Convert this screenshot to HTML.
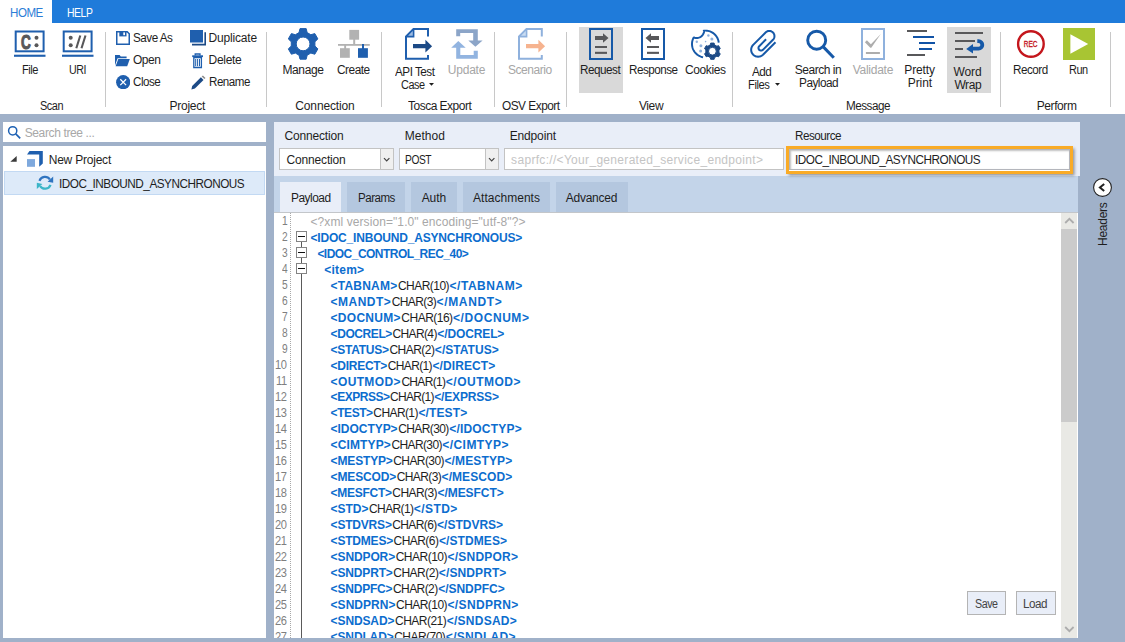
<!DOCTYPE html>
<html><head><meta charset="utf-8"><title>API Scan</title>
<style>
html,body{margin:0;padding:0}
body{width:1125px;height:642px;overflow:hidden;background:#a0b1c9;font-family:"Liberation Sans",sans-serif;position:relative}
.t{position:absolute;white-space:pre;line-height:16px;font-size:12px}
.r{position:absolute;display:block}
.ln{position:absolute;white-space:pre;line-height:16px;font-size:12px}
</style></head><body>
<div class="r" style="left:0px;top:0px;width:1125px;height:23px;background:#1f7bda;"></div>
<div class="r" style="left:0px;top:0px;width:52px;height:23px;background:#ffffff;"></div>
<span class="t" style="left:10.10px;top:4.63px;font-size:12px;letter-spacing:-0.500px;color:#2b7dd6;transform:scaleX(0.9652);transform-origin:0 0;">HOME</span>
<span class="t" style="left:67.10px;top:4.63px;font-size:12px;letter-spacing:-0.500px;color:#ffffff;transform:scaleX(0.8645);transform-origin:0 0;">HELP</span>
<div class="r" style="left:0px;top:23px;width:1125px;height:91px;background:#ffffff;"></div>
<div class="r" style="left:105px;top:32px;width:1px;height:75px;background:#c8c8c8;"></div>
<div class="r" style="left:266px;top:32px;width:1px;height:75px;background:#c8c8c8;"></div>
<div class="r" style="left:381px;top:32px;width:1px;height:75px;background:#c8c8c8;"></div>
<div class="r" style="left:494px;top:32px;width:1px;height:75px;background:#c8c8c8;"></div>
<div class="r" style="left:566px;top:32px;width:1px;height:75px;background:#c8c8c8;"></div>
<div class="r" style="left:732px;top:32px;width:1px;height:75px;background:#c8c8c8;"></div>
<div class="r" style="left:1000px;top:32px;width:1px;height:75px;background:#c8c8c8;"></div>
<div class="r" style="left:1110px;top:32px;width:1px;height:75px;background:#c8c8c8;"></div>
<span class="t" style="left:40.10px;top:98.33px;font-size:12px;letter-spacing:-0.500px;color:#1e1e1e;transform:scaleX(0.9082);transform-origin:0 0;">Scan</span>
<span class="t" style="left:169.60px;top:98.33px;font-size:12px;letter-spacing:-0.286px;color:#1e1e1e;">Project</span>
<span class="t" style="left:295.30px;top:98.33px;font-size:12px;letter-spacing:-0.137px;color:#1e1e1e;">Connection</span>
<span class="t" style="left:407.50px;top:98.33px;font-size:12px;letter-spacing:-0.500px;color:#1e1e1e;transform:scaleX(0.9982);transform-origin:0 0;">Tosca Export</span>
<span class="t" style="left:502.40px;top:98.33px;font-size:12px;letter-spacing:-0.500px;color:#1e1e1e;transform:scaleX(0.9864);transform-origin:0 0;">OSV Export</span>
<span class="t" style="left:638.90px;top:98.33px;font-size:12px;letter-spacing:-0.375px;color:#1e1e1e;">View</span>
<span class="t" style="left:846.10px;top:98.33px;font-size:12px;letter-spacing:-0.500px;color:#1e1e1e;transform:scaleX(0.9734);transform-origin:0 0;">Message</span>
<span class="t" style="left:1036.80px;top:98.33px;font-size:12px;letter-spacing:-0.429px;color:#1e1e1e;">Perform</span>
<svg class="r" style="left:13.8px;top:30px" width="32" height="28" viewBox="0 0 32 28"><title>C:</title><rect x="1.7" y="1.5" width="27.9" height="19.8" fill="#fff" stroke="#1f5fae" stroke-width="2"/><rect x="-0.3" y="24.7" width="31.8" height="2.1" fill="#1f5fae"/><text transform="translate(7,18.9) scale(0.66,1)" font-family="Liberation Sans" font-weight="bold" font-size="20.6" fill="#58585a" stroke="#58585a" stroke-width="1.1">C</text><circle cx="22.5" cy="7.7" r="2" fill="#58585a"/><circle cx="22.5" cy="15.3" r="2" fill="#58585a"/></svg>
<svg class="r" style="left:61.8px;top:30px" width="32" height="28" viewBox="0 0 32 28"><title>://</title><rect x="1.7" y="1.5" width="27.9" height="19.8" fill="#fff" stroke="#1f5fae" stroke-width="2"/><rect x="-0.3" y="24.7" width="31.8" height="2.1" fill="#1f5fae"/><circle cx="8.7" cy="7.7" r="2" fill="#58585a"/><circle cx="8.7" cy="15.3" r="2" fill="#58585a"/><path d="M14.3 18.3 L18.3 5.5 M19.5 18.3 L23.5 5.5" stroke="#58585a" stroke-width="2.1" fill="none"/></svg>
<span class="t" style="left:22.10px;top:61.83px;font-size:12px;letter-spacing:-0.500px;color:#1e1e1e;transform:scaleX(0.9231);transform-origin:0 0;">File</span>
<span class="t" style="left:69.10px;top:61.83px;font-size:12px;letter-spacing:-0.500px;color:#1e1e1e;transform:scaleX(0.8859);transform-origin:0 0;">URI</span>
<svg class="r" style="left:116px;top:31px" width="14" height="14" viewBox="0 0 14 14"><path d="M0.75 0.75 H11.2 L13.25 2.8 V13.25 H0.75 Z" fill="#fff" stroke="#1f5fae" stroke-width="1.5"/><rect x="3.3" y="0.8" width="7.2" height="4.6" fill="#1f5fae"/><rect x="7.3" y="1.4" width="1.7" height="2.8" fill="#fff"/></svg>
<span class="t" style="left:133.40px;top:30.33px;font-size:12px;letter-spacing:-0.500px;color:#1e1e1e;transform:scaleX(0.9728);transform-origin:0 0;">Save As</span>
<svg class="r" style="left:115px;top:53.5px" width="15" height="13" viewBox="0 0 15 13"><path d="M0 1 H4.6 L5.8 2.4 H11.6 V4.2 H2.6 L0 11.6 Z" fill="#1f5fae"/><path d="M3.3 5 H14.8 L12.2 12.2 H0.6 Z" fill="#1f5fae"/></svg>
<span class="t" style="left:133.40px;top:52.33px;font-size:12px;letter-spacing:-0.500px;color:#1e1e1e;transform:scaleX(0.9974);transform-origin:0 0;">Open</span>
<svg class="r" style="left:116px;top:74.5px" width="14.4" height="14.4" viewBox="0 0 14.4 14.4"><circle cx="7.2" cy="7.2" r="7.1" fill="#1f5fae"/><path d="M4.3 4.3 L10.1 10.1 M10.1 4.3 L4.3 10.1" stroke="#fff" stroke-width="1.25"/></svg>
<span class="t" style="left:133.40px;top:74.33px;font-size:12px;letter-spacing:-0.500px;color:#1e1e1e;transform:scaleX(0.9681);transform-origin:0 0;">Close</span>
<svg class="r" style="left:190px;top:30px" width="16.5" height="16" viewBox="0 0 16.5 16"><path d="M2 14.6 H15.2 V2.2" fill="none" stroke="#1c4a86" stroke-width="1.6"/><rect x="0" y="0" width="13" height="12.5" fill="#1f5fae"/></svg>
<span class="t" style="left:208.50px;top:30.33px;font-size:12px;letter-spacing:-0.170px;color:#1e1e1e;">Duplicate</span>
<svg class="r" style="left:191px;top:52.5px" width="13" height="16" viewBox="0 0 13 16"><path d="M4.2 2.6 V1 H9 V2.6" fill="none" stroke="#1f5fae" stroke-width="1.3"/><rect x="1.2" y="2.3" width="10.8" height="1.8" fill="#1f5fae"/><path d="M2.8 4.6 H10.4 V14.5 H2.8 Z" fill="#fff" stroke="#1f5fae" stroke-width="1.3"/><path d="M4.7 6 V13.2 M6.6 6 V13.2 M8.5 6 V13.2" stroke="#1f5fae" stroke-width="1"/></svg>
<span class="t" style="left:208.50px;top:52.33px;font-size:12px;letter-spacing:-0.283px;color:#1e1e1e;">Delete</span>
<svg class="r" style="left:190.5px;top:74.5px" width="15.5" height="15" viewBox="0 0 15.5 15"><path d="M0.4 14.4 L1.2 10.9 L9.9 2.3 L12.5 4.9 L3.9 13.6 Z" fill="#1c4a86"/><path d="M10.7 1.5 L11.9 0.4 L14.5 3 L13.4 4.1 Z" fill="#8a8a8a"/></svg>
<span class="t" style="left:208.50px;top:74.33px;font-size:12px;letter-spacing:-0.500px;color:#1e1e1e;transform:scaleX(0.9653);transform-origin:0 0;">Rename</span>
<svg class="r" style="left:286px;top:27px" width="34" height="34" viewBox="0 0 34 34"><path d="M20.18 32.19 L14.02 32.19 L13.04 28.19 L9.35 26.07 L5.40 27.22 L2.31 21.88 L5.29 19.03 L5.29 14.77 L2.31 11.92 L5.40 6.58 L9.35 7.73 L13.04 5.61 L14.02 1.61 L20.18 1.61 L21.16 5.61 L24.85 7.73 L28.80 6.58 L31.89 11.92 L28.91 14.77 L28.91 19.03 L31.89 21.88 L28.80 27.22 L24.85 26.07 L21.16 28.19 Z M10.20 16.90 a6.90 6.90 0 1 0 13.80 0 a6.90 6.90 0 1 0 -13.80 0 Z" fill="#1f5fae" fill-rule="evenodd" stroke="#1f5fae" stroke-width="1" stroke-linejoin="round"/></svg>
<span class="t" style="left:282.40px;top:61.83px;font-size:12px;letter-spacing:-0.358px;color:#1e1e1e;">Manage</span>
<svg class="r" style="left:337px;top:29px" width="34" height="30" viewBox="0 0 34 30"><rect x="12.3" y="0.9" width="9.8" height="9.8" fill="#b2b2b2"/><rect x="16.2" y="10" width="2" height="5" fill="#b2b2b2"/><rect x="1" y="15" width="31.8" height="1.8" fill="#b2b2b2"/><rect x="7.2" y="16" width="1.9" height="4" fill="#b2b2b2"/><rect x="3" y="19.2" width="9.8" height="9.6" fill="#b2b2b2"/><rect x="25" y="15" width="2" height="5" fill="#1f5fae"/><rect x="21" y="19.2" width="9.9" height="9.6" fill="#1f5fae"/></svg>
<span class="t" style="left:337.10px;top:61.83px;font-size:12px;letter-spacing:-0.500px;color:#1e1e1e;transform:scaleX(0.9897);transform-origin:0 0;">Create</span>
<svg class="r" style="left:405px;top:28px" width="30" height="32" viewBox="0 0 30 32"><path d="M23 8.4 V1 H8.6 L1 8.6 V30.8 H23 V27.1" fill="none" stroke="#1f5fae" stroke-width="2"/><path d="M1 8.6 H8.6 V1 Z" fill="#9dbbe2" stroke="#1f5fae" stroke-width="1.6" stroke-linejoin="miter"/><path d="M8 16 H20.4 V11.8 L27.1 18.2 L20.4 24.6 V20.2 H8 Z" fill="#1c4a86"/></svg>
<span class="t" style="left:395.10px;top:63.53px;font-size:12px;letter-spacing:-0.500px;color:#1e1e1e;transform:scaleX(0.9753);transform-origin:0 0;">API Test</span>
<span class="t" style="left:400.50px;top:76.63px;font-size:12px;letter-spacing:-0.500px;color:#1e1e1e;transform:scaleX(0.9078);transform-origin:0 0;">Case</span>
<svg class="r" style="left:428.6px;top:83.3px" width="5" height="3" viewBox="0 0 5 3"><path d="M0 0 H5 L2.5 2.8 Z" fill="#1e1e1e"/></svg>
<svg class="r" style="left:451px;top:29px" width="32" height="30" viewBox="0 0 32 30"><path d="M5.2 0.2 H26.8 V11.4 H31.6 L24.4 17.7 L17.3 11.4 H22.2 V3.9 H9.2 V7.3 H5.2 Z" fill="#8ca5c8"/><path d="M7.3 11.9 L14.7 18.8 H9.3 V25.9 H22.7 V21.7 H26.8 V29.8 H5.2 V18.8 H0.2 Z" fill="#92b4e0"/></svg>
<span class="t" style="left:447.80px;top:61.83px;font-size:12px;letter-spacing:-0.223px;color:#a6a6a6;">Update</span>
<svg class="r" style="left:518.2px;top:28px" width="30" height="32" viewBox="0 0 30 32"><path d="M23.8 8.4 V1 H8.6 L1 8.6 V30.8 H23.8 V27.1" fill="none" stroke="#8fb1dd" stroke-width="2"/><path d="M1 8.6 H8.6 V1 Z" fill="#c9dcf2" stroke="#8fb1dd" stroke-width="1.6" stroke-linejoin="miter"/><path d="M8 16 H20.4 V11.8 L27.1 18.2 L20.4 24.6 V20.2 H8 Z" fill="#f6b38f"/></svg>
<span class="t" style="left:508.00px;top:61.83px;font-size:12px;letter-spacing:-0.470px;color:#a6a6a6;">Scenario</span>
<div class="r" style="left:579px;top:27px;width:44px;height:66px;background:#d9d9d9;"></div>
<svg class="r" style="left:588px;top:27px" width="26" height="34" viewBox="0 0 26 34"><rect x="2" y="2" width="22" height="30" fill="none" stroke="#1659a8" stroke-width="2"/><path d="M7 9 H15 V6.3 L20.5 11 L15 15.7 V12.9 H7 Z" fill="#58585a"/><rect x="7" y="19" width="12" height="2" fill="#58585a"/><rect x="7" y="24.8" width="12" height="2.1" fill="#58585a"/></svg>
<svg class="r" style="left:640.1px;top:27px" width="26" height="34" viewBox="0 0 26 34"><rect x="2" y="2" width="22" height="30" fill="#fff" stroke="#1659a8" stroke-width="2"/><path d="M19 9 H11 V6.3 L5.5 11 L11 15.7 V12.9 H19 Z" fill="#58585a"/><rect x="7" y="19" width="12" height="2" fill="#58585a"/><rect x="7" y="24.8" width="12" height="2.1" fill="#58585a"/></svg>
<span class="t" style="left:580.40px;top:61.83px;font-size:12px;letter-spacing:-0.500px;color:#1e1e1e;transform:scaleX(0.9746);transform-origin:0 0;">Request</span>
<span class="t" style="left:628.70px;top:61.83px;font-size:12px;letter-spacing:-0.500px;color:#1e1e1e;transform:scaleX(0.9711);transform-origin:0 0;">Response</span>
<svg class="r" style="left:690px;top:28px" width="34" height="34" viewBox="0 0 34 34"><path d="M28.73 14.60 L28.57 13.55 L28.34 12.51 L28.02 11.49 L27.62 10.51 L27.15 9.55 L26.60 8.64 L25.98 7.78 L25.30 6.96 L24.55 6.21 L23.74 5.51 L22.88 4.88 L21.98 4.33 L21.03 3.84 L20.05 3.43 L19.04 3.10 L18.00 2.86 L16.95 2.69 L15.89 2.61 L14.83 2.61 L13.77 2.70 L14.18 2.93 L14.04 3.94 L13.77 4.93 L13.36 5.87 L12.84 6.74 L12.20 7.54 L11.46 8.25 L10.63 8.85 L9.73 9.33 L8.77 9.68 L7.77 9.91 L6.75 10.00 L5.73 9.95 L4.72 9.76 L3.75 9.45 L3.57 9.71 L3.07 10.74 L2.67 11.82 L2.36 12.92 L2.14 14.05 L2.02 15.19 L2.00 16.34 L2.08 17.49 L2.26 18.62 L2.53 19.73 L2.90 20.82 L3.36 21.87 L3.90 22.88 L4.53 23.84 L5.25 24.74 L6.03 25.58 L6.88 26.35 L7.80 27.04 L8.77 27.65 L9.79 28.17 L10.86 28.61 L11.95 28.95 L13.07 29.20" fill="none" stroke="#1659a8" stroke-width="1.95" stroke-linecap="butt" stroke-linejoin="round"/><circle cx="6.8" cy="13.8" r="1.2" fill="#8fb1dd"/><circle cx="18.4" cy="7.5" r="1.2" fill="#8fb1dd"/><circle cx="21.9" cy="11.1" r="1.5" fill="#8fb1dd"/><circle cx="15.6" cy="13.6" r="0.8" fill="#8fb1dd"/><circle cx="10.9" cy="17.8" r="1.5" fill="#8fb1dd"/><circle cx="10.6" cy="23.1" r="1.5" fill="#8fb1dd"/><path d="M24.13 31.32 L20.67 31.32 L20.33 29.57 L17.92 28.18 L16.23 28.75 L14.51 25.76 L15.85 24.59 L15.85 21.81 L14.51 20.64 L16.23 17.65 L17.92 18.22 L20.33 16.83 L20.67 15.08 L24.13 15.08 L24.47 16.83 L26.88 18.22 L28.57 17.65 L30.29 20.64 L28.95 21.81 L28.95 24.59 L30.29 25.76 L28.57 28.75 L26.88 28.18 L24.47 29.57 Z M18.50 23.20 a3.90 3.90 0 1 0 7.80 0 a3.90 3.90 0 1 0 -7.80 0 Z" fill="#1c4a86" fill-rule="evenodd" stroke="#1c4a86" stroke-width="1" stroke-linejoin="round"/></svg>
<span class="t" style="left:684.90px;top:61.83px;font-size:12px;letter-spacing:-0.377px;color:#1e1e1e;">Cookies</span>
<svg class="r" style="left:746px;top:26px" width="34" height="36" viewBox="0 0 34 36"><path d="M29.49 16.21 L17.01 28.69 L17.01 28.69 L15.95 29.56 L14.75 30.20 L13.45 30.60 L12.09 30.73 L10.74 30.60 L9.43 30.20 L8.23 29.56 L7.18 28.69 L6.31 27.64 L5.67 26.44 L5.28 25.14 L5.14 23.78 L5.28 22.42 L5.67 21.12 L6.31 19.92 L7.18 18.87 L19.59 6.46 L19.59 6.46 L20.38 5.81 L21.28 5.33 L22.25 5.03 L23.26 4.93 L24.28 5.03 L25.25 5.33 L26.15 5.81 L26.94 6.46 L27.59 7.24 L28.07 8.14 L28.37 9.12 L28.46 10.13 L28.37 11.15 L28.07 12.12 L27.59 13.02 L26.94 13.81 L16.90 23.85 L16.90 23.85 L16.51 24.17 L16.06 24.41 L15.57 24.56 L15.06 24.61 L14.56 24.56 L14.07 24.41 L13.62 24.17 L13.22 23.85 L12.90 23.46 L12.66 23.01 L12.51 22.52 L12.46 22.01 L12.51 21.51 L12.66 21.02 L12.90 20.57 L13.22 20.17 L20.08 13.32" fill="none" stroke="#1659a8" stroke-width="2" stroke-linecap="butt" stroke-linejoin="round"/></svg>
<span class="t" style="left:751.70px;top:63.53px;font-size:12px;letter-spacing:-0.500px;color:#1e1e1e;transform:scaleX(0.9768);transform-origin:0 0;">Add</span>
<span class="t" style="left:748.40px;top:76.63px;font-size:12px;letter-spacing:-0.500px;color:#1e1e1e;transform:scaleX(0.9339);transform-origin:0 0;">Files</span>
<svg class="r" style="left:775.4px;top:83.3px" width="5" height="3" viewBox="0 0 5 3"><path d="M0 0 H5 L2.5 2.8 Z" fill="#1e1e1e"/></svg>
<svg class="r" style="left:804px;top:28px" width="32" height="32" viewBox="0 0 32 32"><circle cx="12.7" cy="12.2" r="9" fill="none" stroke="#1659a8" stroke-width="2.9"/><path d="M19.1 18.6 L29.8 29.8" stroke="#1659a8" stroke-width="3" stroke-linecap="butt"/></svg>
<span class="t" style="left:794.80px;top:61.83px;font-size:12px;letter-spacing:-0.489px;color:#1e1e1e;">Search in</span>
<span class="t" style="left:799.30px;top:75.33px;font-size:12px;letter-spacing:-0.500px;color:#1e1e1e;transform:scaleX(0.9830);transform-origin:0 0;">Payload</span>
<svg class="r" style="left:860.1px;top:27px" width="26" height="34" viewBox="0 0 26 34"><rect x="2" y="2" width="22" height="30" fill="#fff" stroke="#8fb1dd" stroke-width="2"/><path d="M4.9 15.3 L6.9 13.3 L10.9 17.3 L20.8 7 L11.3 20.7 H10.3 Z" fill="#adadad"/><rect x="5.9" y="25" width="14" height="2" fill="#adadad"/></svg>
<span class="t" style="left:852.70px;top:61.83px;font-size:12px;letter-spacing:-0.257px;color:#a6a6a6;">Validate</span>
<div class="r" style="left:907px;top:30px;width:20px;height:2px;background:#58585a;"></div>
<div class="r" style="left:913px;top:36px;width:21px;height:2px;background:#1153a6;"></div>
<div class="r" style="left:919px;top:42px;width:16px;height:2px;background:#1153a6;"></div>
<div class="r" style="left:919px;top:48px;width:13px;height:2px;background:#1153a6;"></div>
<div class="r" style="left:907px;top:54px;width:18px;height:2px;background:#58585a;"></div>
<span class="t" style="left:904.30px;top:62.23px;font-size:12px;letter-spacing:-0.146px;color:#1e1e1e;">Pretty</span>
<span class="t" style="left:907.80px;top:74.53px;font-size:12px;letter-spacing:-0.086px;color:#1e1e1e;">Print</span>
<div class="r" style="left:947px;top:27px;width:44px;height:66px;background:#d9d9d9;"></div>
<div class="r" style="left:955px;top:32px;width:28px;height:2px;background:#58585a;"></div>
<div class="r" style="left:955px;top:40px;width:19.8px;height:2px;background:#58585a;"></div>
<div class="r" style="left:955px;top:48px;width:8px;height:2px;background:#58585a;"></div>
<div class="r" style="left:955px;top:56px;width:22px;height:2px;background:#58585a;"></div>
<svg class="r" style="left:964px;top:36px" width="22" height="18" viewBox="0 0 22 18"><path d="M13.3 5.2 H14.6 A3.7 3.7 0 0 1 14.6 12.6 H8" fill="none" stroke="#1659a8" stroke-width="3.8"/><path d="M2.2 12.9 L9 8 V17.6 Z" fill="#1659a8"/></svg>
<span class="t" style="left:953.40px;top:64.23px;font-size:12px;letter-spacing:-0.094px;color:#1e1e1e;">Word</span>
<span class="t" style="left:954.40px;top:76.53px;font-size:12px;letter-spacing:-0.427px;color:#1e1e1e;">Wrap</span>
<svg class="r" style="left:1016px;top:28.9px" width="30" height="30" viewBox="0 0 30 30"><circle cx="14.9" cy="15" r="12.8" fill="#fff" stroke="#c4161c" stroke-width="2.4"/><text x="7.8" y="18.1" textLength="13.6" lengthAdjust="spacingAndGlyphs" font-family="Liberation Sans" font-size="8.5" fill="#c4161c" stroke="#c4161c" stroke-width="0.35">REC</text></svg>
<span class="t" style="left:1013.30px;top:61.83px;font-size:12px;letter-spacing:-0.500px;color:#1e1e1e;transform:scaleX(0.9719);transform-origin:0 0;">Record</span>
<svg class="r" style="left:1063px;top:28px" width="32" height="32" viewBox="0 0 32 32"><rect width="32" height="32" fill="#a8c533"/><path d="M7.4 6.2 L25.2 16 L7.4 25.8 Z" fill="#fff"/></svg>
<span class="t" style="left:1069.30px;top:61.83px;font-size:12px;letter-spacing:-0.500px;color:#1e1e1e;transform:scaleX(0.9123);transform-origin:0 0;">Run</span>
<div class="r" style="left:3px;top:122px;width:263px;height:20px;background:#ffffff;"></div>
<svg class="r" style="left:7px;top:124.5px" width="15" height="15" viewBox="0 0 15 15"><circle cx="5.7" cy="5.8" r="4.1" fill="none" stroke="#1f62b4" stroke-width="1.5"/><path d="M8.7 8.8 L13.2 13.3" stroke="#1f62b4" stroke-width="1.7"/></svg>
<span class="t" style="left:24.70px;top:125.33px;font-size:12px;letter-spacing:-0.371px;color:#a8a8a8;">Search tree ...</span>
<div class="r" style="left:3px;top:146px;width:263px;height:491.5px;background:#ffffff;"></div>
<svg class="r" style="left:10px;top:155px" width="8" height="8" viewBox="0 0 8 8"><path d="M6.7 1.1 V6.7 H0.3 Z" fill="#3a3a3a"/></svg>
<svg class="r" style="left:26px;top:150px" width="18" height="18" viewBox="0 0 18 18"><path d="M3.5 1 H16.8 V13.4 L13.2 16.8 V4.4 H1 Z" fill="#1f5fae"/><rect x="1" y="9.1" width="8" height="7.7" fill="#7fa9dd"/></svg>
<span class="t" style="left:48.70px;top:152.33px;font-size:12px;letter-spacing:-0.216px;color:#1e1e1e;">New Project</span>
<div class="r" style="left:4px;top:171px;width:261px;height:24px;background:#ddeaf9;border:1px solid #c2d9f3;box-sizing:border-box;"></div>
<svg class="r" style="left:35px;top:174px" width="20" height="18" viewBox="0 0 20 18"><path d="M4.46 6.80 A5.9 5.9 0 0 1 14.90 5.50" fill="none" stroke="#2f74c0" stroke-width="2.2"/><path d="M18.20 2.60 L18.20 8.80 L12.60 7.70 Z" fill="#2f74c0"/><path d="M15.54 10.80 A5.9 5.9 0 0 1 5.10 12.10" fill="none" stroke="#3bb5c8" stroke-width="2.2"/><path d="M1.80 15.00 L1.80 8.80 L7.40 9.90 Z" fill="#3bb5c8"/></svg>
<span class="t" style="left:58.50px;top:176.23px;font-size:12px;letter-spacing:-0.500px;color:#1e1e1e;transform:scaleX(0.9806);transform-origin:0 0;">IDOC_INBOUND_ASYNCHRONOUS</span>
<div class="r" style="left:274px;top:122px;width:805.5px;height:54px;background:#e9eef8;"></div>
<div class="r" style="left:274px;top:176px;width:804px;height:36px;background:#c3d4e9;"></div>
<span class="t" style="left:284.40px;top:128.33px;font-size:12px;letter-spacing:-0.148px;color:#1e1e1e;">Connection</span>
<span class="t" style="left:404.70px;top:128.33px;font-size:12px;letter-spacing:0.051px;color:#1e1e1e;">Method</span>
<span class="t" style="left:509.70px;top:128.33px;font-size:12px;letter-spacing:-0.147px;color:#1e1e1e;">Endpoint</span>
<span class="t" style="left:795.00px;top:128.33px;font-size:12px;letter-spacing:-0.500px;color:#1e1e1e;transform:scaleX(0.9731);transform-origin:0 0;">Resource</span>
<div class="r" style="left:279px;top:148px;width:114.5px;height:21.5px;background:#ffffff;border:1px solid #c3c3c3;box-sizing:border-box;"></div>
<div class="r" style="left:379.5px;top:148px;width:14px;height:21.5px;background:#f0f0f0;border:1px solid #c3c3c3;box-sizing:border-box;"></div>
<svg class="r" style="left:383px;top:156.5px" width="8" height="6" viewBox="0 0 8 6"><path d="M1 1.2 L3.7 4 L6.4 1.2" fill="none" stroke="#444" stroke-width="1.2"/></svg>
<span class="t" style="left:286.50px;top:152.33px;font-size:12px;letter-spacing:-0.159px;color:#1e1e1e;">Connection</span>
<div class="r" style="left:399px;top:148px;width:99.5px;height:21.5px;background:#ffffff;border:1px solid #c3c3c3;box-sizing:border-box;"></div>
<div class="r" style="left:484.5px;top:148px;width:14px;height:21.5px;background:#f0f0f0;border:1px solid #c3c3c3;box-sizing:border-box;"></div>
<svg class="r" style="left:488px;top:156.5px" width="8" height="6" viewBox="0 0 8 6"><path d="M1 1.2 L3.7 4 L6.4 1.2" fill="none" stroke="#444" stroke-width="1.2"/></svg>
<span class="t" style="left:404.70px;top:152.33px;font-size:12px;letter-spacing:-0.500px;color:#1e1e1e;transform:scaleX(0.8515);transform-origin:0 0;">POST</span>
<div class="r" style="left:504px;top:148px;width:279.5px;height:21.5px;background:#ffffff;border:1px solid #c3c3c3;box-sizing:border-box;"></div>
<span class="t" style="left:511.10px;top:152.33px;font-size:12px;letter-spacing:0.312px;color:#c4c4c4;">saprfc://&lt;Your_generated_service_endpoint&gt;</span>
<div class="r" style="left:786px;top:146px;width:287px;height:28px;background:#ffffff;border:3px solid #f9ab27;box-sizing:border-box;box-shadow:1.5px 1.5px 3px rgba(0,0,0,0.4);"></div>
<div class="r" style="left:789px;top:149px;width:280.5px;height:20.5px;background:#ffffff;border:1px solid #b4b6bc;box-sizing:border-box;box-shadow:inset 1px 1px 2px rgba(0,0,0,0.25);"></div>
<span class="t" style="left:795.00px;top:152.33px;font-size:12px;letter-spacing:-0.500px;color:#1e1e1e;transform:scaleX(0.9806);transform-origin:0 0;">IDOC_INBOUND_ASYNCHRONOUS</span>
<div class="r" style="left:279.7px;top:182px;width:61.8px;height:30px;background:#e9eef8;"></div>
<span class="t" style="left:290.50px;top:190.33px;font-size:12px;letter-spacing:-0.500px;color:#1e1e1e;transform:scaleX(0.9929);transform-origin:0 0;">Payload</span>
<div class="r" style="left:347px;top:182px;width:58.4px;height:30px;background:#b4c7df;"></div>
<span class="t" style="left:358.00px;top:190.33px;font-size:12px;letter-spacing:-0.500px;color:#1e1e1e;transform:scaleX(0.9628);transform-origin:0 0;">Params</span>
<div class="r" style="left:411.2px;top:182px;width:45.8px;height:30px;background:#b4c7df;"></div>
<span class="t" style="left:421.70px;top:190.33px;font-size:12px;letter-spacing:-0.100px;color:#1e1e1e;">Auth</span>
<div class="r" style="left:462.8px;top:182px;width:87px;height:30px;background:#b4c7df;"></div>
<span class="t" style="left:473.10px;top:190.33px;font-size:12px;letter-spacing:0.013px;color:#1e1e1e;">Attachments</span>
<div class="r" style="left:556px;top:182px;width:72px;height:30px;background:#b4c7df;"></div>
<span class="t" style="left:565.70px;top:190.33px;font-size:12px;letter-spacing:-0.241px;color:#1e1e1e;">Advanced</span>
<div class="r" style="left:274px;top:212px;width:804px;height:425.5px;background:#ffffff;"></div>
<div class="r" style="left:274px;top:212px;width:804px;height:1px;background:#c3c6ca;"></div>
<div class="r" style="left:1061px;top:213px;width:16px;height:424.5px;background:#e9e9e5;"></div>
<div class="r" style="left:1061px;top:229px;width:16px;height:193px;background:#cbcbcb;"></div>
<svg class="r" style="left:1064px;top:216px" width="11" height="9" viewBox="0 0 11 9"><path d="M1.2 7 L5.4 2.8 L9.6 7" fill="none" stroke="#adadad" stroke-width="1.8"/></svg>
<svg class="r" style="left:1064px;top:625.2px" width="11" height="9" viewBox="0 0 11 9"><path d="M1.2 2 L5.4 6.2 L9.6 2" fill="none" stroke="#adadad" stroke-width="1.8"/></svg>
<div class="r" style="left:290px;top:213px;width:1px;height:424.5px;background:repeating-linear-gradient(to bottom,#a8a8a8 0 1px,#fff 1px 2px)"></div>
<div class="r" style="left:301px;top:242px;width:1px;height:395.5px;background:#5a5a5a;"></div>
<span class="t" style="left:281.50px;top:213.33px;font-size:12px;letter-spacing:-0.500px;color:#7f7f7f;transform:scaleX(0.8508);transform-origin:0 0;">1</span>
<div class="ln" style="left:310.5px;top:213.78px"><span style="letter-spacing:0.083px;color:#a8a8a8;">&lt;?xml version="1.0" encoding="utf-8"?&gt;</span></div>
<span class="t" style="left:281.50px;top:229.31px;font-size:12px;letter-spacing:-0.500px;color:#7f7f7f;transform:scaleX(0.8508);transform-origin:0 0;">2</span>
<div class="ln" style="left:310.5px;top:229.76px"><span style="letter-spacing:-0.191px;color:#0c6dce;font-weight:bold;">&lt;IDOC_INBOUND_ASYNCHRONOUS&gt;</span></div>
<span class="t" style="left:281.50px;top:245.28px;font-size:12px;letter-spacing:-0.500px;color:#7f7f7f;transform:scaleX(0.8508);transform-origin:0 0;">3</span>
<div class="ln" style="left:317.4px;top:245.73px"><span style="letter-spacing:-0.532px;color:#0c6dce;font-weight:bold;">&lt;IDOC_CONTROL_REC_40&gt;</span></div>
<span class="t" style="left:281.50px;top:261.25px;font-size:12px;letter-spacing:-0.500px;color:#7f7f7f;transform:scaleX(0.8508);transform-origin:0 0;">4</span>
<div class="ln" style="left:324.2px;top:261.70px"><span style="letter-spacing:0.249px;color:#0c6dce;font-weight:bold;">&lt;item&gt;</span></div>
<span class="t" style="left:281.50px;top:277.22px;font-size:12px;letter-spacing:-0.500px;color:#7f7f7f;transform:scaleX(0.8508);transform-origin:0 0;">5</span>
<div class="ln" style="left:330.6px;top:277.67px"><span style="letter-spacing:0.205px;color:#0c6dce;font-weight:bold;">&lt;TABNAM&gt;</span><span style="letter-spacing:-0.532px;color:#1e1e1e;margin-left:0.60px;">CHAR(10)</span><span style="letter-spacing:0.524px;color:#0c6dce;font-weight:bold;margin-left:0.50px;">&lt;/TABNAM&gt;</span></div>
<span class="t" style="left:281.50px;top:293.19px;font-size:12px;letter-spacing:-0.500px;color:#7f7f7f;transform:scaleX(0.8508);transform-origin:0 0;">6</span>
<div class="ln" style="left:330.6px;top:293.64px"><span style="letter-spacing:0.461px;color:#0c6dce;font-weight:bold;">&lt;MANDT&gt;</span><span style="letter-spacing:-0.627px;color:#1e1e1e;margin-left:0.60px;">CHAR(3)</span><span style="letter-spacing:0.662px;color:#0c6dce;font-weight:bold;margin-left:0.50px;">&lt;/MANDT&gt;</span></div>
<span class="t" style="left:281.50px;top:309.17px;font-size:12px;letter-spacing:-0.500px;color:#7f7f7f;transform:scaleX(0.8508);transform-origin:0 0;">7</span>
<div class="ln" style="left:330.6px;top:309.62px"><span style="letter-spacing:0.269px;color:#0c6dce;font-weight:bold;">&lt;DOCNUM&gt;</span><span style="letter-spacing:-0.520px;color:#1e1e1e;margin-left:0.60px;">CHAR(16)</span><span style="letter-spacing:0.569px;color:#0c6dce;font-weight:bold;margin-left:0.50px;">&lt;/DOCNUM&gt;</span></div>
<span class="t" style="left:281.50px;top:325.14px;font-size:12px;letter-spacing:-0.500px;color:#7f7f7f;transform:scaleX(0.8508);transform-origin:0 0;">8</span>
<div class="ln" style="left:330.6px;top:325.59px"><span style="letter-spacing:-0.425px;color:#0c6dce;font-weight:bold;">&lt;DOCREL&gt;</span><span style="letter-spacing:-0.627px;color:#1e1e1e;margin-left:0.60px;">CHAR(4)</span><span style="letter-spacing:-0.115px;color:#0c6dce;font-weight:bold;margin-left:0.50px;">&lt;/DOCREL&gt;</span></div>
<span class="t" style="left:281.50px;top:341.11px;font-size:12px;letter-spacing:-0.500px;color:#7f7f7f;transform:scaleX(0.8508);transform-origin:0 0;">9</span>
<div class="ln" style="left:330.6px;top:341.56px"><span style="letter-spacing:-0.256px;color:#0c6dce;font-weight:bold;">&lt;STATUS&gt;</span><span style="letter-spacing:-0.527px;color:#1e1e1e;margin-left:0.60px;">CHAR(2)</span><span style="letter-spacing:0.036px;color:#0c6dce;font-weight:bold;margin-left:0.50px;">&lt;/STATUS&gt;</span></div>
<span class="t" style="left:275.29px;top:357.08px;font-size:12px;letter-spacing:-0.500px;color:#7f7f7f;transform:scaleX(0.9251);transform-origin:0 0;">10</span>
<div class="ln" style="left:330.6px;top:357.53px"><span style="letter-spacing:-0.275px;color:#0c6dce;font-weight:bold;">&lt;DIRECT&gt;</span><span style="letter-spacing:-0.627px;color:#1e1e1e;margin-left:0.60px;">CHAR(1)</span><span style="letter-spacing:0.097px;color:#0c6dce;font-weight:bold;margin-left:0.50px;">&lt;/DIRECT&gt;</span></div>
<span class="t" style="left:276.12px;top:373.05px;font-size:12px;letter-spacing:-0.500px;color:#7f7f7f;transform:scaleX(0.9247);transform-origin:0 0;">11</span>
<div class="ln" style="left:330.6px;top:373.50px"><span style="letter-spacing:0.355px;color:#0c6dce;font-weight:bold;">&lt;OUTMOD&gt;</span><span style="letter-spacing:-0.670px;color:#1e1e1e;margin-left:0.60px;">CHAR(1)</span><span style="letter-spacing:0.501px;color:#0c6dce;font-weight:bold;margin-left:0.50px;">&lt;/OUTMOD&gt;</span></div>
<span class="t" style="left:275.29px;top:389.03px;font-size:12px;letter-spacing:-0.500px;color:#7f7f7f;transform:scaleX(0.9251);transform-origin:0 0;">12</span>
<div class="ln" style="left:330.6px;top:389.48px"><span style="letter-spacing:-0.475px;color:#0c6dce;font-weight:bold;">&lt;EXPRSS&gt;</span><span style="letter-spacing:-0.727px;color:#1e1e1e;margin-left:0.60px;">CHAR(1)</span><span style="letter-spacing:-0.159px;color:#0c6dce;font-weight:bold;margin-left:0.50px;">&lt;/EXPRSS&gt;</span></div>
<span class="t" style="left:275.29px;top:405.00px;font-size:12px;letter-spacing:-0.500px;color:#7f7f7f;transform:scaleX(0.9251);transform-origin:0 0;">13</span>
<div class="ln" style="left:330.6px;top:405.45px"><span style="letter-spacing:-0.431px;color:#0c6dce;font-weight:bold;">&lt;TEST&gt;</span><span style="letter-spacing:-0.584px;color:#1e1e1e;margin-left:0.60px;">CHAR(1)</span><span style="letter-spacing:0.126px;color:#0c6dce;font-weight:bold;margin-left:0.50px;">&lt;/TEST&gt;</span></div>
<span class="t" style="left:275.29px;top:420.97px;font-size:12px;letter-spacing:-0.500px;color:#7f7f7f;transform:scaleX(0.9251);transform-origin:0 0;">14</span>
<div class="ln" style="left:330.6px;top:421.42px"><span style="letter-spacing:-0.040px;color:#0c6dce;font-weight:bold;">&lt;IDOCTYP&gt;</span><span style="letter-spacing:-0.607px;color:#1e1e1e;margin-left:0.60px;">CHAR(30)</span><span style="letter-spacing:0.201px;color:#0c6dce;font-weight:bold;margin-left:0.50px;">&lt;/IDOCTYP&gt;</span></div>
<span class="t" style="left:275.29px;top:436.94px;font-size:12px;letter-spacing:-0.500px;color:#7f7f7f;transform:scaleX(0.9251);transform-origin:0 0;">15</span>
<div class="ln" style="left:330.6px;top:437.39px"><span style="letter-spacing:0.130px;color:#0c6dce;font-weight:bold;">&lt;CIMTYP&gt;</span><span style="letter-spacing:-0.645px;color:#1e1e1e;margin-left:0.60px;">CHAR(30)</span><span style="letter-spacing:0.446px;color:#0c6dce;font-weight:bold;margin-left:0.50px;">&lt;/CIMTYP&gt;</span></div>
<span class="t" style="left:275.29px;top:452.91px;font-size:12px;letter-spacing:-0.500px;color:#7f7f7f;transform:scaleX(0.9251);transform-origin:0 0;">16</span>
<div class="ln" style="left:330.6px;top:453.36px"><span style="letter-spacing:-0.157px;color:#0c6dce;font-weight:bold;">&lt;MESTYP&gt;</span><span style="letter-spacing:-0.595px;color:#1e1e1e;margin-left:0.60px;">CHAR(30)</span><span style="letter-spacing:0.135px;color:#0c6dce;font-weight:bold;margin-left:0.50px;">&lt;/MESTYP&gt;</span></div>
<span class="t" style="left:275.29px;top:468.89px;font-size:12px;letter-spacing:-0.500px;color:#7f7f7f;transform:scaleX(0.9251);transform-origin:0 0;">17</span>
<div class="ln" style="left:330.6px;top:469.34px"><span style="letter-spacing:-0.138px;color:#0c6dce;font-weight:bold;">&lt;MESCOD&gt;</span><span style="letter-spacing:-0.627px;color:#1e1e1e;margin-left:0.60px;">CHAR(3)</span><span style="letter-spacing:0.074px;color:#0c6dce;font-weight:bold;margin-left:0.50px;">&lt;/MESCOD&gt;</span></div>
<span class="t" style="left:275.29px;top:484.86px;font-size:12px;letter-spacing:-0.500px;color:#7f7f7f;transform:scaleX(0.9251);transform-origin:0 0;">18</span>
<div class="ln" style="left:330.6px;top:485.31px"><span style="letter-spacing:-0.282px;color:#0c6dce;font-weight:bold;">&lt;MESFCT&gt;</span><span style="letter-spacing:-0.570px;color:#1e1e1e;margin-left:0.60px;">CHAR(3)</span><span style="letter-spacing:-0.054px;color:#0c6dce;font-weight:bold;margin-left:0.50px;">&lt;/MESFCT&gt;</span></div>
<span class="t" style="left:275.29px;top:500.83px;font-size:12px;letter-spacing:-0.500px;color:#7f7f7f;transform:scaleX(0.9251);transform-origin:0 0;">19</span>
<div class="ln" style="left:330.6px;top:501.28px"><span style="letter-spacing:-0.026px;color:#0c6dce;font-weight:bold;">&lt;STD&gt;</span><span style="letter-spacing:-0.627px;color:#1e1e1e;margin-left:0.60px;">CHAR(1)</span><span style="letter-spacing:0.423px;color:#0c6dce;font-weight:bold;margin-left:0.50px;">&lt;/STD&gt;</span></div>
<span class="t" style="left:275.29px;top:516.80px;font-size:12px;letter-spacing:-0.500px;color:#7f7f7f;transform:scaleX(0.9251);transform-origin:0 0;">20</span>
<div class="ln" style="left:330.6px;top:517.25px"><span style="letter-spacing:-0.200px;color:#0c6dce;font-weight:bold;">&lt;STDVRS&gt;</span><span style="letter-spacing:-0.627px;color:#1e1e1e;margin-left:0.60px;">CHAR(6)</span><span style="letter-spacing:-0.003px;color:#0c6dce;font-weight:bold;margin-left:0.50px;">&lt;/STDVRS&gt;</span></div>
<span class="t" style="left:275.29px;top:532.77px;font-size:12px;letter-spacing:-0.500px;color:#7f7f7f;transform:scaleX(0.9251);transform-origin:0 0;">21</span>
<div class="ln" style="left:330.6px;top:533.22px"><span style="letter-spacing:-0.204px;color:#0c6dce;font-weight:bold;">&lt;STDMES&gt;</span><span style="letter-spacing:-0.555px;color:#1e1e1e;margin-left:0.60px;">CHAR(6)</span><span style="letter-spacing:0.105px;color:#0c6dce;font-weight:bold;margin-left:0.50px;">&lt;/STDMES&gt;</span></div>
<span class="t" style="left:275.29px;top:548.75px;font-size:12px;letter-spacing:-0.500px;color:#7f7f7f;transform:scaleX(0.9251);transform-origin:0 0;">22</span>
<div class="ln" style="left:330.6px;top:549.20px"><span style="letter-spacing:-0.109px;color:#0c6dce;font-weight:bold;">&lt;SNDPOR&gt;</span><span style="letter-spacing:-0.507px;color:#1e1e1e;margin-left:0.60px;">CHAR(10)</span><span style="letter-spacing:0.233px;color:#0c6dce;font-weight:bold;margin-left:0.50px;">&lt;/SNDPOR&gt;</span></div>
<span class="t" style="left:275.29px;top:564.72px;font-size:12px;letter-spacing:-0.500px;color:#7f7f7f;transform:scaleX(0.9251);transform-origin:0 0;">23</span>
<div class="ln" style="left:330.6px;top:565.17px"><span style="letter-spacing:-0.159px;color:#0c6dce;font-weight:bold;">&lt;SNDPRT&gt;</span><span style="letter-spacing:-0.513px;color:#1e1e1e;margin-left:0.60px;">CHAR(2)</span><span style="letter-spacing:0.100px;color:#0c6dce;font-weight:bold;margin-left:0.50px;">&lt;/SNDPRT&gt;</span></div>
<span class="t" style="left:275.29px;top:580.69px;font-size:12px;letter-spacing:-0.500px;color:#7f7f7f;transform:scaleX(0.9251);transform-origin:0 0;">24</span>
<div class="ln" style="left:330.6px;top:581.14px"><span style="letter-spacing:-0.197px;color:#0c6dce;font-weight:bold;">&lt;SNDPFC&gt;</span><span style="letter-spacing:-0.570px;color:#1e1e1e;margin-left:0.60px;">CHAR(2)</span><span style="letter-spacing:-0.011px;color:#0c6dce;font-weight:bold;margin-left:0.50px;">&lt;/SNDPFC&gt;</span></div>
<span class="t" style="left:275.29px;top:596.66px;font-size:12px;letter-spacing:-0.500px;color:#7f7f7f;transform:scaleX(0.9251);transform-origin:0 0;">25</span>
<div class="ln" style="left:330.6px;top:597.11px"><span style="letter-spacing:0.023px;color:#0c6dce;font-weight:bold;">&lt;SNDPRN&gt;</span><span style="letter-spacing:-0.557px;color:#1e1e1e;margin-left:0.60px;">CHAR(10)</span><span style="letter-spacing:0.361px;color:#0c6dce;font-weight:bold;margin-left:0.50px;">&lt;/SNDPRN&gt;</span></div>
<span class="t" style="left:275.29px;top:612.63px;font-size:12px;letter-spacing:-0.500px;color:#7f7f7f;transform:scaleX(0.9251);transform-origin:0 0;">26</span>
<div class="ln" style="left:330.6px;top:613.08px"><span style="letter-spacing:-0.115px;color:#0c6dce;font-weight:bold;">&lt;SNDSAD&gt;</span><span style="letter-spacing:-0.507px;color:#1e1e1e;margin-left:0.60px;">CHAR(21)</span><span style="letter-spacing:0.239px;color:#0c6dce;font-weight:bold;margin-left:0.50px;">&lt;/SNDSAD&gt;</span></div>
<span class="t" style="left:275.29px;top:628.61px;font-size:12px;letter-spacing:-0.500px;color:#7f7f7f;transform:scaleX(0.9251);transform-origin:0 0;">27</span>
<div class="ln" style="left:330.6px;top:629.06px"><span style="letter-spacing:-0.131px;color:#0c6dce;font-weight:bold;">&lt;SNDLAD&gt;</span><span style="letter-spacing:-0.520px;color:#1e1e1e;margin-left:0.60px;">CHAR(70)</span><span style="letter-spacing:0.281px;color:#0c6dce;font-weight:bold;margin-left:0.50px;">&lt;/SNDLAD&gt;</span></div>
<div class="r" style="left:296px;top:231px;width:11px;height:11px;background:#ffffff;border:1px solid #848484;box-sizing:border-box;"></div>
<div class="r" style="left:298px;top:236px;width:7px;height:1px;background:#111;"></div>
<div class="r" style="left:296px;top:247px;width:11px;height:11px;background:#ffffff;border:1px solid #848484;box-sizing:border-box;"></div>
<div class="r" style="left:298px;top:252px;width:7px;height:1px;background:#111;"></div>
<div class="r" style="left:296px;top:263px;width:11px;height:11px;background:#ffffff;border:1px solid #848484;box-sizing:border-box;"></div>
<div class="r" style="left:298px;top:268px;width:7px;height:1px;background:#111;"></div>
<div class="r" style="left:0px;top:637.5px;width:1125px;height:4.5px;background:#a0b1c9;"></div>
<div class="r" style="left:967px;top:591px;width:39px;height:24px;background:#e9eef8;border:1px solid #b4b4b4;box-sizing:border-box;"></div>
<span class="t" style="left:974.50px;top:595.73px;font-size:12px;letter-spacing:-0.500px;color:#444;transform:scaleX(0.8927);transform-origin:0 0;">Save</span>
<div class="r" style="left:1016px;top:591px;width:40px;height:24px;background:#e9eef8;border:1px solid #b4b4b4;box-sizing:border-box;"></div>
<span class="t" style="left:1023.10px;top:595.73px;font-size:12px;letter-spacing:-0.500px;color:#444;transform:scaleX(0.9716);transform-origin:0 0;">Load</span>
<svg class="r" style="left:1092px;top:177px" width="21" height="21" viewBox="0 0 21 21"><circle cx="10.5" cy="10.5" r="8.9" fill="#fff" stroke="#222" stroke-width="1.1"/><path d="M12.2 6.9 L7.9 10.5 L12.2 14.1" fill="none" stroke="#222" stroke-width="2"/></svg>
<span class="t" style="left:1095.2px;top:245.6px;font-size:12px;color:#1e1e1e;letter-spacing:-0.260px;transform:rotate(-90deg);transform-origin:0 0;">Headers</span>
</body></html>
